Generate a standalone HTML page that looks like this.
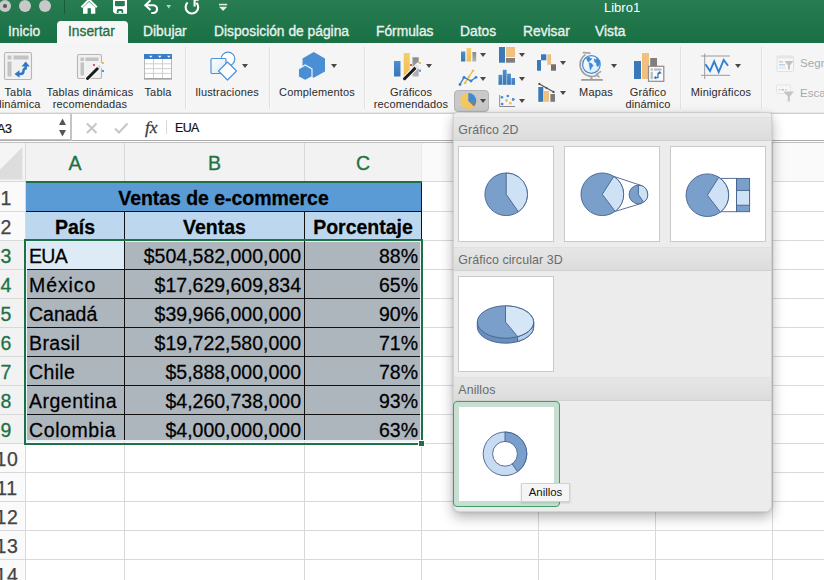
<!DOCTYPE html>
<html>
<head>
<meta charset="utf-8">
<style>
*{box-sizing:border-box;margin:0;padding:0}
html,body{width:824px;height:580px;overflow:hidden;background:#fff;font-family:"Liberation Sans",sans-serif;}
#app{position:relative;width:824px;height:580px;overflow:hidden;background:#fff}
.abs{position:absolute}
/* title + tabs */
#green{left:0;top:0;width:824px;height:43px;background:linear-gradient(#277c52 0,#20764a 22px,#187044 43px)}
.dot{position:absolute;width:12.6px;height:12.6px;border-radius:50%;background:#c8c8c8;top:-0.3px}
.tab{position:absolute;top:23px;height:18px;line-height:18px;font-size:13.8px;color:#e9f1ec;white-space:nowrap;font-weight:normal;-webkit-text-stroke:0.35px #e9f1ec}
#tabsel{left:57px;top:21px;width:71px;height:23px;background:#f6f6f6;border-radius:4px 4px 0 0}
/* ribbon */
#ribbon{left:0;top:43px;width:824px;height:70px;background:#f5f5f5;border-bottom:1px solid #e6e6e6}
.rl{position:absolute;font-size:11px;line-height:12px;color:#2b2b2b;text-align:center;white-space:nowrap;letter-spacing:0.15px}
.vsep{position:absolute;top:47px;height:62px;width:1px;background:#dfdfdf;box-shadow:1px 0 0 #fafafa}
.arr{position:absolute;width:0;height:0;border-left:3px solid transparent;border-right:3px solid transparent;border-top:4px solid #484848;margin-left:-0.4px;margin-top:-0.2px}
/* formula bar */
#fbar{left:0;top:114px;width:824px;height:27px;background:#fff;border-bottom:1px solid #acacac}
/* sheet */
#sheet{left:0;top:141px;width:824px;height:439px;background:#fff}
.ch{position:absolute;top:143px;height:38px;line-height:40px;text-align:center;font-size:19.5px;color:#1e7145;-webkit-text-stroke:0.3px #1e7145}
.rh{position:absolute;left:-14px;width:40px;text-align:center;font-size:19.5px;color:#444;height:29px;line-height:33px;-webkit-text-stroke:0.25px #444}
.rh.s{-webkit-text-stroke:0.3px #1e7145}
.rh.s{color:#1e7145}
.cell{position:absolute;font-size:19.5px;color:#000;height:28px;line-height:28px;white-space:nowrap;overflow:visible;transform:scaleY(1.045);transform-origin:0 21px;-webkit-text-stroke:0.25px #000}
.gl{position:absolute;background:#d9d9d9}
.bk{background:#111}
.gr{background:#1e7145}
.cell.b{font-weight:bold}
.cell.r{text-align:right}
/* panel */
#panel{left:453px;top:113px;width:319px;height:398.5px;background:#ececec;border:1px solid #d2d2d2;border-top:none;border-radius:3px 3px 6px 6px;box-shadow:0 5px 13px rgba(0,0,0,.3),0 0 3px rgba(0,0,0,.15)}
.ph{position:absolute;left:0;width:317px;height:24px;line-height:24px;background:linear-gradient(#e6e6e6,#dcdcdc);border-top:1px solid #e0e0e0;border-bottom:1px solid #d0d0d0;font-size:12.4px;color:#6a6a6a;padding-left:4.3px;letter-spacing:0.1px}
.thumb{position:absolute;width:96px;height:96px;background:#fff;border:1px solid #c9c9c9}
</style>
</head>
<body>
<div id="app">

<!-- SHEET -->
<div id="sheet" class="abs"></div>
<!-- header bg -->
<div class="abs" style="left:0;top:143px;width:824px;height:38px;background:#fafafa"></div><div class="abs" style="left:0;top:143px;width:25px;height:38px;background:#f5f5f5"></div>
<div class="abs" style="left:26px;top:143px;width:396px;height:38px;background:#f2f2f2"></div>
<div class="abs" style="left:0;top:181px;width:25px;height:399px;background:#fafafa"></div>
<div class="abs" style="left:0;top:240px;width:25px;height:203px;background:#f2f2f2"></div>
<svg class="abs" style="left:0;top:143px" width="25" height="38"><polygon points="22.5,4 22.5,36.5 -10,36.5" fill="#dddddd"/></svg>
<!-- gridlines -->
<div class="gl" style="left:25px;top:143px;width:1px;height:437px"></div>
<div class="gl" style="left:124px;top:143px;width:1px;height:437px"></div>
<div class="gl" style="left:304px;top:143px;width:1px;height:437px"></div>
<div class="gl" style="left:421px;top:182px;width:1px;height:398px"></div><div class="gl" style="left:421px;top:143px;width:1px;height:38px;background:#ececec"></div>
<div class="gl" style="left:538px;top:143px;width:1px;height:437px"></div>
<div class="gl" style="left:655px;top:143px;width:1px;height:437px"></div>
<div class="gl" style="left:772px;top:143px;width:1px;height:437px"></div>
<div class="gl" style="left:0;top:142px;width:824px;height:1px;background:#bfbfbf"></div>
<div class="gl" style="left:0;top:181px;width:824px;height:1px"></div>
<div class="gl" style="left:0;top:211px;width:824px;height:1px"></div>
<div class="gl" style="left:0;top:240px;width:824px;height:1px"></div>
<div class="gl" style="left:0;top:269px;width:824px;height:1px"></div>
<div class="gl" style="left:0;top:298px;width:824px;height:1px"></div>
<div class="gl" style="left:0;top:327px;width:824px;height:1px"></div>
<div class="gl" style="left:0;top:356px;width:824px;height:1px"></div>
<div class="gl" style="left:0;top:385px;width:824px;height:1px"></div>
<div class="gl" style="left:0;top:414px;width:824px;height:1px"></div>
<div class="gl" style="left:0;top:443px;width:824px;height:1px"></div>
<div class="gl" style="left:0;top:472px;width:824px;height:1px"></div>
<div class="gl" style="left:0;top:501px;width:824px;height:1px"></div>
<div class="gl" style="left:0;top:530px;width:824px;height:1px"></div>
<div class="gl" style="left:0;top:559px;width:824px;height:1px"></div>
<!-- column letters -->
<div class="ch" style="left:26px;width:98px">A</div>
<div class="ch" style="left:125px;width:179px">B</div>
<div class="ch" style="left:305px;width:116px">C</div>
<!-- row numbers -->
<div class="rh" style="top:182px">1</div>
<div class="rh" style="top:211px">2</div>
<div class="rh s" style="top:240px">3</div>
<div class="rh s" style="top:269px">4</div>
<div class="rh s" style="top:298px">5</div>
<div class="rh s" style="top:327px">6</div>
<div class="rh s" style="top:356px">7</div>
<div class="rh s" style="top:385px">8</div>
<div class="rh s" style="top:414px">9</div>
<div class="rh" style="top:443px;left:-13px;letter-spacing:0.7px">10</div>
<div class="rh" style="top:472px;left:-13px;letter-spacing:0.7px">11</div>
<div class="rh" style="top:501px;left:-13px;letter-spacing:0.7px">12</div>
<div class="rh" style="top:530px;left:-13px;letter-spacing:0.7px">13</div>
<div class="rh" style="top:559px;left:-13px;letter-spacing:0.7px">14</div>
<!-- cell fills -->
<div class="abs" style="left:26px;top:183px;width:395px;height:28px;background:#5b9bd5"></div>
<div class="abs" style="left:26px;top:212px;width:395px;height:27px;background:#bdd7ee"></div>
<div class="abs" style="left:26px;top:241px;width:395px;height:201px;background:#e9f1f9"></div>
<div class="abs" style="left:27px;top:242px;width:393px;height:198px;background:#adb5bd"></div>
<div class="abs" style="left:27px;top:242px;width:97px;height:27px;background:#ddebf7"></div>
<!-- black borders -->
<div class="abs bk" style="left:124px;top:211px;width:1.4px;height:229px"></div>
<div class="abs bk" style="left:304px;top:211px;width:1.4px;height:229px"></div>
<div class="abs bk" style="left:421px;top:183px;width:1.4px;height:57px"></div>
<div class="abs bk" style="left:26px;top:210.6px;width:396px;height:1.4px"></div>
<div class="abs bk" style="left:27px;top:269px;width:393px;height:1.3px"></div>
<div class="abs bk" style="left:27px;top:298px;width:393px;height:1.3px"></div>
<div class="abs bk" style="left:27px;top:327px;width:393px;height:1.3px"></div>
<div class="abs bk" style="left:27px;top:356px;width:393px;height:1.3px"></div>
<div class="abs bk" style="left:27px;top:385px;width:393px;height:1.3px"></div>
<div class="abs bk" style="left:27px;top:414px;width:393px;height:1.3px"></div>
<!-- green header underline + selection -->
<div class="abs gr" style="left:26px;top:181px;width:396px;height:2px"></div>
<div class="abs" style="left:24px;top:239px;width:399px;height:206px;border:2px solid #1e7145"></div>
<div class="abs" style="left:418px;top:440px;width:7px;height:7px;background:#1e7145;border:1px solid #fff"></div>
<!-- cell text -->
<div class="cell b" style="left:26px;top:184px;width:395px;text-align:center;letter-spacing:-0.05px">Ventas de e-commerce</div>
<div class="cell b" style="left:26px;top:213px;width:98px;text-align:center">País</div>
<div class="cell b" style="left:125px;top:213px;width:179px;text-align:center">Ventas</div>
<div class="cell b" style="left:305px;top:213px;width:116px;text-align:center">Porcentaje</div>
<div class="cell" style="left:29px;top:242px;letter-spacing:-0.7px">EUA</div>
<div class="cell" style="left:29px;top:271px;letter-spacing:0.9px">México</div>
<div class="cell" style="left:29px;top:300px">Canadá</div>
<div class="cell" style="left:29px;top:329px;letter-spacing:0.4px">Brasil</div>
<div class="cell" style="left:29px;top:358px;letter-spacing:0.35px">Chile</div>
<div class="cell" style="left:29px;top:387px;letter-spacing:0.5px">Argentina</div>
<div class="cell" style="left:29px;top:416px;letter-spacing:0.6px">Colombia</div>
<div class="cell r" style="left:125px;top:242px;width:176px">$504,582,000,000</div>
<div class="cell r" style="left:125px;top:271px;width:176px">$17,629,609,834</div>
<div class="cell r" style="left:125px;top:300px;width:176px">$39,966,000,000</div>
<div class="cell r" style="left:125px;top:329px;width:176px">$19,722,580,000</div>
<div class="cell r" style="left:125px;top:358px;width:176px">$5,888,000,000</div>
<div class="cell r" style="left:125px;top:387px;width:176px">$4,260,738,000</div>
<div class="cell r" style="left:125px;top:416px;width:176px">$4,000,000,000</div>
<div class="cell r" style="left:305px;top:242px;width:113px">88%</div>
<div class="cell r" style="left:305px;top:271px;width:113px">65%</div>
<div class="cell r" style="left:305px;top:300px;width:113px">90%</div>
<div class="cell r" style="left:305px;top:329px;width:113px">71%</div>
<div class="cell r" style="left:305px;top:358px;width:113px">78%</div>
<div class="cell r" style="left:305px;top:387px;width:113px">93%</div>
<div class="cell r" style="left:305px;top:416px;width:113px">63%</div>

</div>

<!-- GREEN BAR -->
<div id="green" class="abs"></div>
<div class="dot" style="left:-1.3px"></div><div class="abs" style="left:3.2px;top:4.4px;width:3.6px;height:3.6px;border-radius:50%;background:#5a5a5a;z-index:2"></div>
<div class="dot" style="left:18.6px"></div>
<div class="dot" style="left:38.7px"></div>
<div class="abs" style="left:64px;top:0;width:1px;height:14px;background:#1a5c37"></div>
<svg class="abs" style="left:60px;top:0" width="180" height="20" viewBox="60 0 180 20">
<!-- home -->
<path d="M81.4 7.2 L89.1 -0.4 L96.8 7.2" fill="none" stroke="#fff" stroke-width="2" stroke-linejoin="miter"/>
<path d="M83 7.6 L89.1 1.8 L95.3 7.6 V13.8 H90.9 V8.2 H87.6 V13.8 H83 Z" fill="#fff"/>
<!-- save -->
<path d="M113 -1 H127 V13.8 H115 L113 11.8 Z M115 1.1 V5 Q115 6.2 116.2 6.2 H123.6 Q124.8 6.2 124.8 5 V1.1 Z M116.8 13.1 V10.6 Q116.8 9.1 118.3 9.1 H121.7 Q123.2 9.1 123.2 10.6 V13.1 H121.6 V11.8 Q121.6 10.9 120.7 10.9 H119.5 Q118.6 10.9 118.6 11.8 V13.1 Z" fill="#fff" fill-rule="evenodd"/>
<!-- undo -->
<path d="M146 5.2 H154 A4 4 0 0 1 154 13 H151.3" fill="none" stroke="#fff" stroke-width="2"/>
<path d="M150.5 0.3 L145.3 5.2 L150.5 10.1" fill="none" stroke="#fff" stroke-width="2" stroke-linejoin="miter"/>
<polygon points="166.3,5 171.1,5 168.7,8.6" fill="#b7d3c3"/>
<!-- redo -->
<path d="M187.6 2.6 A6.3 6.3 0 1 0 196.4 2.8" fill="none" stroke="#fff" stroke-width="2.1"/>
<path d="M194.6 6.6 V-0.2 H198.8" fill="none" stroke="#fff" stroke-width="2.1"/>
<!-- customize -->
<rect x="219" y="3.8" width="8.2" height="1.5" fill="#e8f0eb"/>
<polygon points="219,6.8 227.2,6.8 223.1,11" fill="#e8f0eb"/>
</svg>
<div id="tabsel" class="abs"></div>
<div class="tab" style="left:8px">Inicio</div>
<div class="tab" style="left:68px;color:#1e6e42;-webkit-text-stroke:0.3px #1e6e42">Insertar</div>
<div class="tab" style="left:143px">Dibujar</div>
<div class="tab" style="left:214px">Disposición de página</div>
<div class="tab" style="left:376px">Fórmulas</div>
<div class="tab" style="left:460px">Datos</div>
<div class="tab" style="left:523px">Revisar</div>
<div class="tab" style="left:595px">Vista</div>
<div class="abs" style="left:604px;top:0px;font-size:13px;line-height:15px;color:#fff">Libro1</div>

<!-- RIBBON -->
<div id="ribbon" class="abs"></div>
<div class="vsep" style="left:185px"></div>
<div class="vsep" style="left:269px"></div>
<div class="vsep" style="left:364px"></div>
<div class="vsep" style="left:680px"></div>
<div class="vsep" style="left:761px"></div>
<!-- labels -->
<div class="rl" style="left:-12px;width:60px;top:86px">Tabla<br>dinámica</div>
<div class="rl" style="left:40px;width:100px;top:86px">Tablas dinámicas<br>recomendadas</div>
<div class="rl" style="left:128px;width:60px;top:86px">Tabla</div>
<div class="rl" style="left:187px;width:80px;top:86px">Ilustraciones</div>
<div class="rl" style="left:267px;width:100px;top:86px">Complementos</div>
<div class="rl" style="left:361px;width:100px;top:86px">Gráficos<br>recomendados</div>
<div class="rl" style="left:566px;width:60px;top:86px">Mapas</div>
<div class="rl" style="left:608px;width:80px;top:86px">Gráfico<br>dinámico</div>
<div class="rl" style="left:681px;width:80px;top:86px">Minigráficos</div>
<div class="rl" style="left:800px;top:57px;color:#a9a9a9;font-size:11.6px;letter-spacing:0;text-align:left">Segm</div>
<div class="rl" style="left:800px;top:87px;color:#a9a9a9;font-size:11.6px;letter-spacing:0;text-align:left">Escal</div>
<!-- dropdown arrows -->
<div class="arr" style="left:242px;top:64px"></div>
<div class="arr" style="left:331px;top:64px"></div>
<div class="arr" style="left:426px;top:64px"></div>
<div class="arr" style="left:480px;top:53.6px"></div>
<div class="arr" style="left:480px;top:76.8px"></div>
<div class="arr" style="left:519px;top:53.6px"></div>
<div class="arr" style="left:519px;top:76.8px"></div>
<div class="arr" style="left:519px;top:99.6px"></div>
<div class="arr" style="left:560px;top:61px"></div>
<div class="arr" style="left:560px;top:91px"></div>
<div class="arr" style="left:611px;top:64px"></div>
<div class="arr" style="left:735px;top:64px"></div>
<!-- pie button bg -->
<div class="abs" style="left:454px;top:90px;width:35px;height:21.6px;background:#c9c9c9;border:1px solid #b4b4b4;border-radius:4px"></div>
<div class="arr" style="left:480px;top:99.6px"></div>
<!-- ICONS SVG -->
<svg class="abs" style="left:0;top:43px" width="824" height="70" viewBox="0 43 824 70">
<defs>
<linearGradient id="gb" x1="0" y1="0" x2="0" y2="1"><stop offset="0" stop-color="#4d8fd0"/><stop offset="1" stop-color="#3a76b4"/></linearGradient>
<linearGradient id="gy" x1="0" y1="0" x2="0" y2="1"><stop offset="0" stop-color="#f5cf6c"/><stop offset="1" stop-color="#eebd55"/></linearGradient>
<linearGradient id="gg" x1="0" y1="0" x2="0" y2="1"><stop offset="0" stop-color="#8a8a8a"/><stop offset="1" stop-color="#b4b4b4"/></linearGradient>
<linearGradient id="gsq" x1="0" y1="0" x2="1" y2="1"><stop offset="0" stop-color="#ffffff"/><stop offset="1" stop-color="#d9e8f7"/></linearGradient>
</defs>
<!-- 1 Tabla dinamica -->
<rect x="4.5" y="52.5" width="27" height="27" rx="1.5" fill="#f1f1f1" stroke="#b6b6b6" stroke-width="1.1"/>
<rect x="7.5" y="55.5" width="4" height="4" fill="#c3c3c3"/>
<rect x="13.5" y="55.5" width="15" height="4" fill="#c3c3c3"/>
<rect x="7.5" y="61.5" width="4" height="15" fill="#c3c3c3"/>
<path d="M18.5 74 H20.5 Q23.4 74 23.4 71.3 Q23.4 68.6 25.7 68.4 V66" fill="none" stroke="#2f78c4" stroke-width="2.5" stroke-linejoin="round"/>
<polygon points="14.5,74 19.5,70.3 19.5,77.7" fill="#2f78c4"/>
<polygon points="25.7,61.5 29.8,66.6 21.6,66.6" fill="#2f78c4"/>
<!-- 2 Tablas dinamicas recomendadas -->
<rect x="77.5" y="54.5" width="24" height="24" rx="1.5" fill="#f1f1f1" stroke="#b6b6b6" stroke-width="1.1"/>
<rect x="80.5" y="57.5" width="3.5" height="3.5" fill="#c3c3c3"/>
<rect x="85.5" y="57.5" width="13" height="3.5" fill="#c3c3c3"/>
<rect x="80.5" y="62.5" width="3.5" height="13" fill="#c3c3c3"/>
<path d="M87.5 78.5 L100.5 65.5" stroke="#f5f5f5" stroke-width="5" stroke-linecap="round"/>
<path d="M87.5 78.5 L97.5 68.5" stroke="#1a1a1a" stroke-width="3" stroke-linecap="round"/>
<path d="M98 68 L100.3 65.7" stroke="#d8d8d8" stroke-width="3" stroke-linecap="butt"/>
<rect x="93" y="64" width="2" height="2" fill="#e0525a"/>
<rect x="102" y="62" width="2" height="2" fill="#f0c040"/>
<rect x="102" y="70" width="2" height="2" fill="#4d94dc"/>
<!-- 3 Tabla -->
<rect x="144.5" y="54.5" width="27" height="24" fill="#ffffff" stroke="#b9b9b9"/>
<rect x="144" y="54" width="28" height="5" fill="#3a7cc6"/>
<path d="M153.5 59 V78 M162.5 59 V78 M145 63.8 H171 M145 68.6 H171 M145 73.4 H171" stroke="#d0d0d0" stroke-width="1" fill="none"/>
<path d="M144 79 H172" stroke="#8f8f8f" stroke-width="1"/>
<polygon points="149,55.7 152.6,55.7 150.8,57.8" fill="#fff"/>
<polygon points="158,55.7 161.6,55.7 159.8,57.8" fill="#fff"/>
<polygon points="167,55.7 170.6,55.7 168.8,57.8" fill="#fff"/>
<!-- 4 Ilustraciones -->
<circle cx="228" cy="59" r="6.8" fill="#fff" stroke="#4a94e0" stroke-width="1.2"/>
<rect x="211" y="58.5" width="15" height="15" rx="1" fill="url(#gsq)" stroke="#4a94e0" stroke-width="1.2"/>
<polygon points="227.5,62 236.5,71 227.5,80 218.5,71" fill="#fff" stroke="#4a94e0" stroke-width="1.2" stroke-linejoin="round"/>
<!-- 5 Complementos -->
<polygon points="313.7,52 325,58.4 325,71.4 313.7,77.8 302.5,71.4 302.5,58.4" fill="#4a8fd3"/>
<polygon points="305.2,65 312,68.9 312,76.7 305.2,80.6 298.4,76.7 298.4,68.9" fill="#4a8fd3" stroke="#eef3f8" stroke-width="1.2"/>
<!-- 6 Graficos recomendados -->
<rect x="394" y="61" width="6.5" height="15.5" fill="url(#gb)"/>
<rect x="403.7" y="53" width="6" height="23.5" fill="url(#gy)"/>
<rect x="412.5" y="57.3" width="6.2" height="19.2" fill="url(#gg)"/>
<path d="M404.5 78.7 L418 65.2" stroke="#f5f5f5" stroke-width="5" stroke-linecap="round"/>
<path d="M404.5 78.7 L415 68.2" stroke="#1a1a1a" stroke-width="3" stroke-linecap="round"/>
<path d="M415.5 67.7 L417.8 65.4" stroke="#e4e4e4" stroke-width="3"/>
<rect x="410" y="64" width="2" height="2" fill="#e0525a"/>
<rect x="419" y="62" width="2" height="2" fill="#f0c040"/>
<rect x="419" y="69.7" width="2" height="2" fill="#4d94dc"/>
<!-- small col1: bar -->
<rect x="461" y="51.5" width="4.3" height="10" fill="url(#gb)"/>
<rect x="466.6" y="48" width="4.5" height="13.5" fill="url(#gy)"/>
<rect x="472.4" y="52" width="3.8" height="9.5" fill="url(#gg)"/>
<!-- line -->
<path d="M465 83 L473 70.7" stroke="#efc050" stroke-width="1.4" fill="none"/>
<circle cx="465" cy="83" r="1.3" fill="#efc050"/><circle cx="469" cy="76.8" r="1.3" fill="#efc050"/><circle cx="473" cy="70.7" r="1.3" fill="#efc050"/>
<path d="M460 84.5 L464 77.3 L471 81 L476 77.3" stroke="#3b80cc" stroke-width="1.4" fill="none"/>
<circle cx="460" cy="84.5" r="1.4" fill="#3b80cc"/><circle cx="464" cy="77.3" r="1.4" fill="#3b80cc"/><circle cx="471" cy="81" r="1.4" fill="#3b80cc"/><circle cx="476" cy="77.3" r="1.4" fill="#3b80cc"/>
<!-- pie -->
<circle cx="468.3" cy="101" r="8" fill="#f3c95f"/>
<path d="M468.3 101 L468.3 93 A8 8 0 0 1 476.3 101 Z" fill="#3f8ad8"/>
<path d="M468.3 101 L476.3 101 A8 8 0 0 1 474 106.6 Z" fill="#7f7f7f"/>
<!-- small col2: treemap -->
<rect x="499" y="47" width="6" height="15.7" fill="#3b78b8"/>
<rect x="506" y="47" width="9" height="10" fill="#f0c080"/>
<rect x="506" y="58" width="9" height="4.7" fill="#7f7f7f"/>
<!-- histogram -->
<rect x="498.5" y="74.8" width="3.8" height="10" fill="url(#gb)"/>
<rect x="502.8" y="69.8" width="3.8" height="15" fill="url(#gb)"/>
<rect x="507.1" y="73.7" width="3.8" height="11.1" fill="url(#gb)"/>
<rect x="511.4" y="78" width="3.6" height="6.8" fill="url(#gb)"/>
<!-- scatter -->
<path d="M499.7 95 V106.5 H515" stroke="#8a8a8a" stroke-width="1" fill="none"/>
<circle cx="502" cy="97.3" r="1.3" fill="#3f8ad8"/><circle cx="507.8" cy="96" r="1.3" fill="#3f8ad8"/><circle cx="513.2" cy="99.5" r="1.4" fill="#3f8ad8"/><circle cx="502.2" cy="104" r="1.3" fill="#3f8ad8"/>
<circle cx="506.5" cy="100.5" r="1.4" fill="#efc050"/><circle cx="510.3" cy="103.2" r="1.4" fill="#efc050"/>
<!-- col3 waterfall -->
<rect x="537" y="60" width="4" height="10.7" fill="#3b78b8"/>
<rect x="541" y="54.3" width="5.3" height="6" fill="#3b78b8"/>
<rect x="547.3" y="54.3" width="3.8" height="10.5" fill="#f0c080"/>
<rect x="551" y="64.3" width="5" height="6.4" fill="#707070"/>
<!-- combo -->
<rect x="538.3" y="87" width="5" height="14.8" fill="#3b78b8"/>
<rect x="544" y="91" width="5" height="10.8" fill="#f0c080"/>
<rect x="550.4" y="94" width="4.6" height="7.8" fill="#7a7a7a"/>
<path d="M539 83.7 L553.7 92" stroke="#555" stroke-width="1.3" fill="none"/>
<circle cx="539.3" cy="83.9" r="1.1" fill="#555"/><circle cx="546.5" cy="88" r="1.1" fill="#555"/><circle cx="553.5" cy="91.9" r="1.2" fill="#555"/>
<!-- Mapas globe -->
<path d="M585.6 54.6 A11.6 11.6 0 0 0 598.4 74.6" fill="none" stroke="#9e9e9e" stroke-width="1.7"/>
<path d="M583.4 52.6 L589.8 53.2" stroke="#a4a4a4" stroke-width="1.7" stroke-linecap="round"/>
<path d="M600.6 71.6 L596.4 74.4 L599 77" stroke="#a4a4a4" stroke-width="1.5" fill="none" stroke-linecap="round"/>
<rect x="590.4" y="76.2" width="2" height="3" fill="#a4a4a4"/>
<rect x="581" y="79" width="22" height="1.8" rx="0.9" fill="#9a9a9a"/>
<circle cx="591.4" cy="64.5" r="8.8" fill="url(#gsq)" stroke="#3f8ad8" stroke-width="1.2"/>
<path d="M586.3 58.3 L589.2 56.8 L590.2 58.4 L592 58.6 L590.6 60.4 L589.6 60.2 L589 62.2 L587.6 61.2 Z M589 62.8 L591.2 63.2 L593.2 65.6 L591.6 67.6 L590.3 70.2 L589.6 66.4 Z M594.2 58.8 L595.6 59.6 L597.6 58.4 L599.8 61.4 L599.6 64.2 L598.2 66.6 L596.8 66 L596.4 63.2 L594.4 61.6 Z" fill="#3f8ad8" stroke="#3f8ad8" stroke-width="0.5" stroke-linejoin="round"/>
<!-- Grafico dinamico -->
<rect x="634" y="61" width="7" height="18" fill="#3b78b8"/>
<rect x="642" y="53" width="7" height="26" fill="#f0c080"/>
<rect x="650.2" y="58" width="6.8" height="10" fill="#7f7f7f"/>
<rect x="648.5" y="66.3" width="15.3" height="15" fill="#fbfbfb" stroke="#8c8c8c" stroke-width="1.2"/>
<rect x="650.6" y="68.4" width="2.3" height="2.3" fill="#bdbdbd"/><rect x="654" y="68.4" width="7.6" height="2.3" fill="#bdbdbd"/><rect x="650.6" y="71.8" width="2.3" height="7.4" fill="#bdbdbd"/>
<path d="M655.5 77.7 H658 V73.3 H660" fill="none" stroke="#2f78c4" stroke-width="1.3"/>
<polygon points="653.6,77.7 656.2,75.8 656.2,79.6" fill="#2f78c4"/>
<polygon points="659.7,70.9 661.8,73.6 657.6,73.6" fill="#2f78c4"/>
<!-- Minigraficos -->
<path d="M704.7 53.5 V79 M701 56 H730 M701 75.3 H730" stroke="#9a9a9a" stroke-width="1" fill="none"/>
<path d="M705.5 64.3 L710 71 L714.2 61.5 L718.7 72 L723.7 60 L728 65.7" stroke="#2f80d6" stroke-width="1.9" fill="none" stroke-linejoin="miter"/>
<!-- Segm -->
<rect x="777" y="56" width="16.5" height="15.5" rx="1" fill="#f7f7f7" stroke="#e0e0e0"/>
<rect x="777" y="56" width="16.5" height="2.5" fill="#e6e6e6"/>
<rect x="779" y="61" width="4" height="1.6" fill="#b9d4ee"/><rect x="779" y="64" width="6" height="1.6" fill="#b9d4ee"/><rect x="779" y="67" width="7" height="1.6" fill="#dbe6f1"/>
<path d="M784.5 61 H793.5 L790 65.5 V69.5 H788 V65.5 Z" fill="#c2c2c2"/>
<!-- Escal -->
<rect x="776.5" y="85" width="14" height="8.5" rx="1" fill="#f7f7f7" stroke="#e4e4e4"/>
<rect x="778.5" y="89" width="2" height="1.4" fill="#b9d4ee"/><rect x="781.5" y="89" width="2.5" height="1.4" fill="#9fc4ea"/><rect x="785" y="89" width="2" height="1.4" fill="#b9d4ee"/>
<path d="M783.5 91.5 H794 L789.8 96.5 V101.5 H787.8 V96.5 Z" fill="#c4c4c4"/>
</svg>

<!-- FORMULA BAR -->
<div id="fbar" class="abs"></div>
<div class="abs" style="left:0;top:113px;width:824px;height:1px;background:#cecece"></div>
<div class="abs" style="left:0;top:139px;width:71px;height:1px;background:#c4c4c4"></div>
<div class="abs" style="left:70px;top:114px;width:2px;height:27px;background:#c4c4c4"></div>
<div class="abs" style="left:-3px;top:122px;font-size:12.5px;line-height:15px;color:#111;letter-spacing:-0.3px;-webkit-text-stroke:0.2px #111">A3</div>
<svg class="abs" style="left:0;top:114px" width="210" height="27" viewBox="0 114 210 27">
<polygon points="59,125 66,125 62.5,118.5" fill="#555"/>
<polygon points="59,130 66,130 62.5,136.5" fill="#555"/>
<path d="M87 123.5 L96.5 133 M96.5 123.5 L87 133" stroke="#c6c6c6" stroke-width="2.1" fill="none"/>
<path d="M115 128.5 L119 132.5 L127.5 123.5" stroke="#c6c6c6" stroke-width="2.1" fill="none"/>
<rect x="166" y="120" width="1" height="14" fill="#dadada"/>
</svg>
<div class="abs" style="left:145px;top:118px;font-family:'Liberation Serif',serif;font-style:italic;font-size:17.5px;line-height:18px;color:#3c3c3c;-webkit-text-stroke:0.3px #3c3c3c">fx</div>
<div class="abs" style="left:175px;top:121px;font-size:12.4px;line-height:15px;color:#111;letter-spacing:-0.6px;-webkit-text-stroke:0.2px #111">EUA</div>

<!-- PANEL -->
<div id="panel" class="abs">
<div class="ph" style="top:4px">Gráfico 2D</div>
<div class="ph" style="top:134px">Gráfico circular 3D</div>
<div class="ph" style="top:264px">Anillos</div>
<div class="thumb" style="left:4px;top:33px"></div>
<div class="thumb" style="left:110px;top:33px"></div>
<div class="thumb" style="left:216px;top:33px"></div>
<div class="thumb" style="left:4px;top:163px"></div>
<div class="abs" style="left:-1px;top:288px;width:106.5px;height:106px;background:#c6dfd1;border:1px solid #3f9e6c;border-radius:4px"></div>
<div class="thumb" style="left:5px;top:294px;width:94.5px;height:94px;border-color:#fff"></div>
<svg class="abs" style="left:0;top:0" width="318" height="398" viewBox="454 113 318 398">
<g stroke="#44618f" stroke-width="0.9">
<!-- pie 1 -->
<circle cx="506.2" cy="194.3" r="21.3" fill="#7a9fcb"/>
<path d="M506.2 194.3 V173 A21.3 21.3 0 0 1 518.4 211.8 Z" fill="#cfe2f5"/>
<!-- pie of pie -->
<path d="M613.8 176.4 L641.5 185.6 M615.2 211.4 L641.5 203.4" fill="none"/>
<circle cx="602.3" cy="194.3" r="21.3" fill="#7a9fcb"/>
<path d="M602.3 194.3 L613.8 176.4 A21.3 21.3 0 0 1 615.2 211.4 Z" fill="#cfe2f5"/>
<circle cx="638.4" cy="194.5" r="9.3" fill="#7a9fcb"/>
<path d="M638.4 194.5 V185.2 A9.3 9.3 0 0 1 643.6 202.2 Z" fill="#cfe2f5"/>
<!-- bar of pie -->
<path d="M718.8 178.4 H736.6 V211.7 H720.4" fill="#fff"/>
<circle cx="707.4" cy="195.2" r="21.3" fill="#7a9fcb"/>
<path d="M707.4 195.2 L718.8 177.3 A21.3 21.3 0 0 1 720.4 212.1 Z" fill="#cfe2f5"/>
<rect x="736.6" y="178.4" width="13" height="33.3" fill="#7a9fcb"/>
<rect x="736.6" y="190.4" width="13" height="14.8" fill="#cfe2f5"/>
<!-- 3D pie -->
<path d="M477.3 322 V327 A28.2 16.2 0 0 0 533.7 327 V322 Z" fill="#6a8fbd"/>
<path d="M517.6 336.6 V341.6 A28.2 16.2 0 0 0 533.7 327 V322 A28.2 16.2 0 0 1 517.6 336.6 Z" fill="#b4cfe9"/>
<ellipse cx="505.5" cy="322" rx="28.2" ry="16.2" fill="#7a9fcb"/>
<path d="M505.5 322 V305.8 A28.2 16.2 0 0 1 517.6 336.6 Z" fill="#d5e6f6"/>
<!-- donut -->
<circle cx="505" cy="453.8" r="21.8" fill="#c7dcf3"/>
<path d="M505 453.8 V432 A21.8 21.8 0 0 1 517.5 471.7 Z" fill="#7a9fcb"/>
<circle cx="505" cy="453.8" r="12.4" fill="#fff"/>
</g>
</svg>
<div class="abs" style="left:67px;top:370px;width:49px;height:19px;background:#f5f5f5;border:1px solid #d2d2d2;font-size:11.4px;line-height:17px;text-align:center;color:#111;letter-spacing:0px;box-shadow:0 1px 2px rgba(0,0,0,.15)">Anillos</div>
</div>

</div>
</body>
</html>
